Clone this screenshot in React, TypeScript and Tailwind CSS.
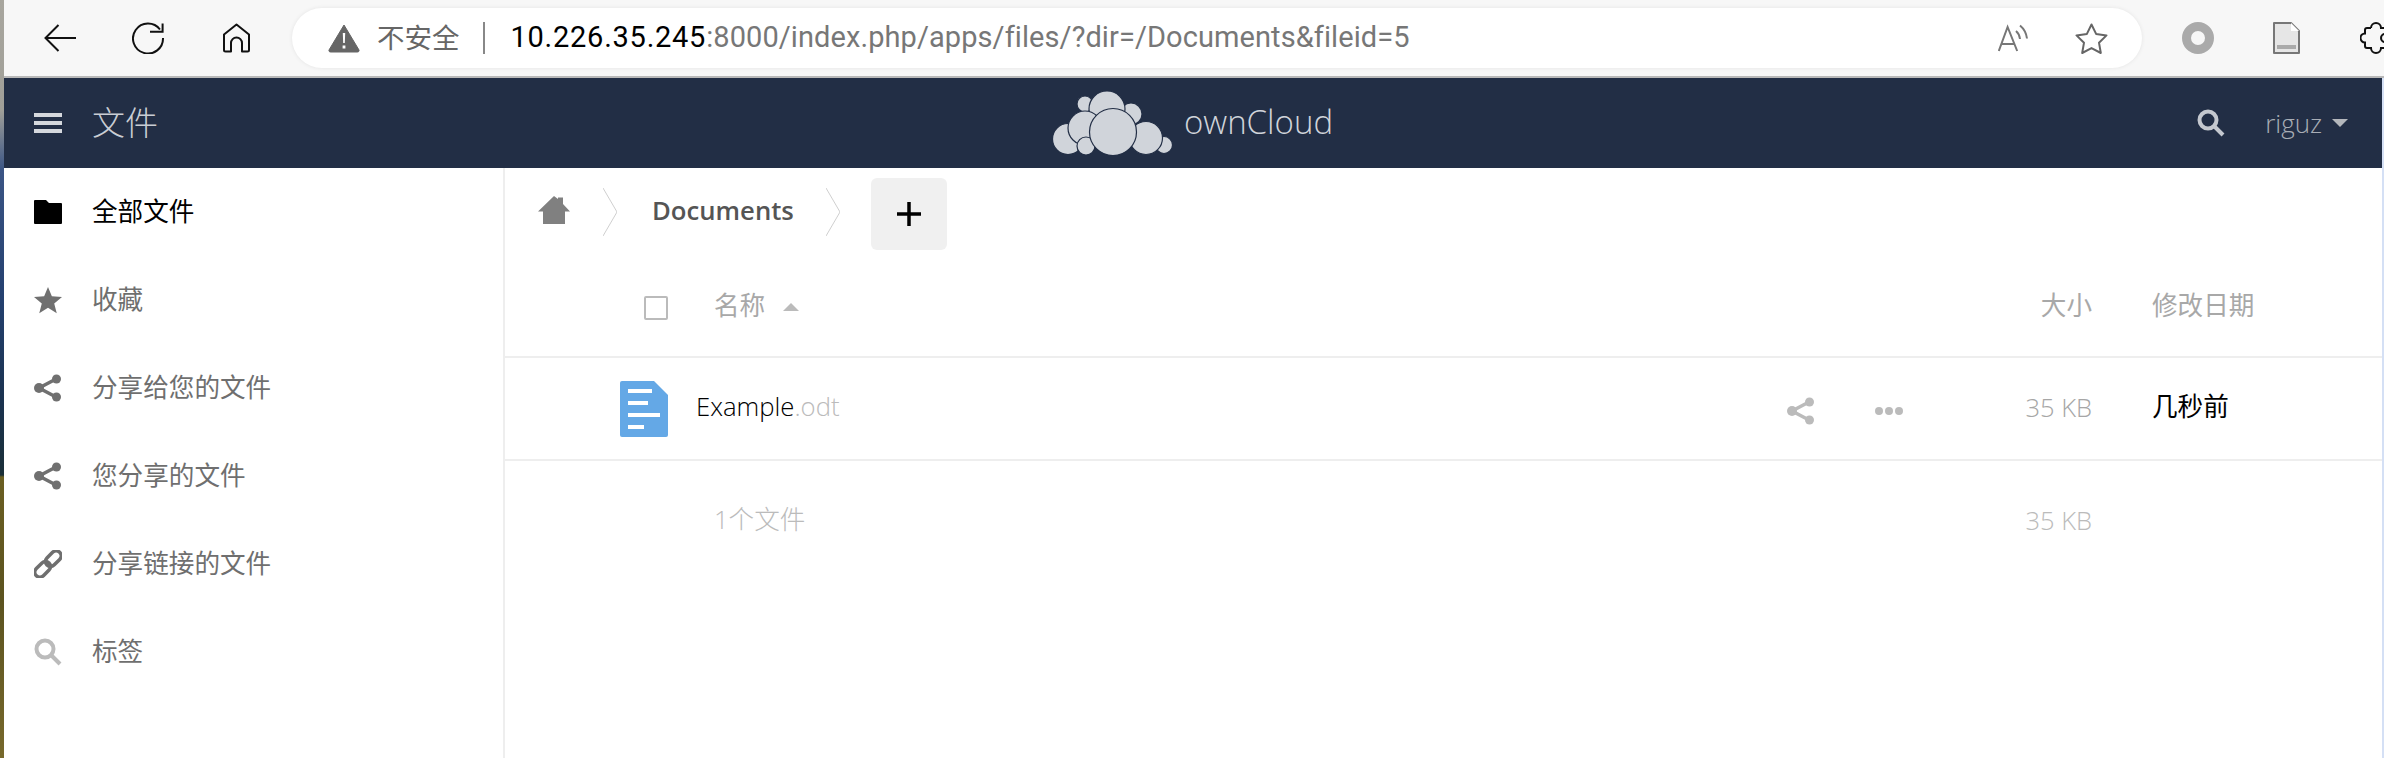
import type { ReactNode } from "react";

function ShareIcon({ className }: { className: string }) {
  return (
    <svg viewBox="0 0 28 28" className={className} fill="currentColor" stroke="currentColor">
      <circle cx="22.5" cy="5" r="4.5" stroke="none" />
      <circle cx="5" cy="14" r="5" stroke="none" />
      <circle cx="22.5" cy="23" r="4.5" stroke="none" />
      <path d="M22 5 5 14l17 9" fill="none" strokeWidth="3.5" />
    </svg>
  );
}

function LinkIcon() {
  return (
    <svg viewBox="0 0 28 28" className="h-7 w-7 text-[#6f6f6f]" fill="none" stroke="currentColor" strokeWidth="3.5">
      <rect x="-2.5" y="9" width="18" height="10" rx="5" transform="rotate(-45 14 14)" />
      <rect x="12.5" y="9" width="18" height="10" rx="5" transform="rotate(-45 14 14)" />
    </svg>
  );
}

function SearchIcon({ className }: { className: string }) {
  return (
    <svg viewBox="0 0 28 28" className={className} fill="none" stroke="currentColor">
      <circle cx="11" cy="11" r="8.5" strokeWidth="4" />
      <path d="M16.5 16.5 26 26" strokeWidth="4" />
    </svg>
  );
}

function NavItem({ icon, label, active }: { icon: ReactNode; label: string; active?: boolean }) {
  return (
    <div className={`flex h-[88px] items-center pl-[30px] text-[25.6px] ${active ? "text-black" : "text-[#6f6f6f]"}`}>
      <div className="flex w-7 justify-center">{icon}</div>
      <span className="ml-[30px]">{label}</span>
    </div>
  );
}

function Toolbar() {
  return (
    <div className="flex h-[76px] items-center overflow-hidden bg-[#f7f7f7] pl-10">
      <svg viewBox="0 0 32 28" className="h-7 w-8 shrink-0" fill="none" stroke="#111" strokeWidth="2">
        <path d="M32 14H1.5M14.5 1 1.5 14l13 13" />
      </svg>
      <svg viewBox="0 0 33 32" className="ml-14 h-8 w-[33px] shrink-0" fill="none" stroke="#111" strokeWidth="2">
        <path d="M28 7.5A15 15 0 1 0 31 16" />
        <path d="M30.6 1.5v8.2H18" />
      </svg>
      <svg viewBox="0 0 29 30" className="ml-[57px] h-[30px] w-[29px] shrink-0" fill="none" stroke="#111" strokeWidth="2">
        <path d="M2 11.5 14.5 1.5 27 11.5V27a1.5 1.5 0 0 1-1.5 1.5H20V20a5.5 5.5 0 0 0-11 0v8.5H3.5A1.5 1.5 0 0 1 2 27Z" strokeLinejoin="round" />
      </svg>

      <div className="ml-[41px] flex h-[60px] w-[1850px] shrink-0 items-center rounded-full bg-white pl-9 pr-[34px] shadow-[0_0_4px_rgba(0,0,0,0.08)]">
        <svg viewBox="0 0 32 30" className="h-[30px] w-8 shrink-0">
          <path d="M16 2 31 27a1.5 1.5 0 0 1-1.5 2h-27A1.5 1.5 0 0 1 1 27Z" fill="#666" stroke="#666" strokeWidth="1" strokeLinejoin="round" />
          <path d="M14.8 10h2.4l-.4 10h-1.6Z M14.6 22.5h2.8v3h-2.8Z" fill="#fff" />
        </svg>
        <span className="ml-[17px] text-[27.5px] text-[#666]">不安全</span>
        <div className="ml-[23px] h-8 w-[2px] bg-[#888]" />
        <div className="ml-[26px] font-['Roboto',sans-serif] text-[29px] tracking-[0.08px] text-[#777]">
          <span className="tracking-[0.75px] text-black">10.226.35.245</span>:8000/index.php/apps/files/?dir=/Documents&amp;fileid=5
        </div>
        <svg viewBox="0 0 30 28" className="ml-auto h-7 w-[30px] shrink-0" fill="none" stroke="#777" strokeWidth="2">
          <path d="M.8 27 9.6 3l9.6 24M3.8 20h12.6" />
          <path d="M18 7q3.5 3 4 8M22 1.5q6 5 7 13" />
        </svg>
        <svg viewBox="0 0 33 31" className="ml-[47px] h-[31px] w-[33px] shrink-0" fill="none" stroke="#666" strokeWidth="2" strokeLinejoin="round">
          <path d="m16.5 1.5 4.6 9.4 10.4 1.5-7.5 7.3 1.8 10.3-9.3-4.9-9.3 4.9 1.8-10.3-7.5-7.3 10.4-1.5Z" />
        </svg>
      </div>

      <svg viewBox="0 0 32 32" className="ml-10 h-8 w-8 shrink-0" fill="none" stroke="#aaa" strokeWidth="9">
        <circle cx="16" cy="16" r="11.5" />
      </svg>
      <svg viewBox="0 0 28 32" className="ml-[58px] h-8 w-7 shrink-0">
        <path d="M2 1h17l8 8v22H2Z" fill="#e6e6e6" stroke="#777" strokeWidth="2" strokeLinejoin="round" />
        <path d="M19 1v8h8" fill="#fff" />
        <rect x="5" y="23" width="19" height="4" fill="#aaa" />
      </svg>
      <svg viewBox="0 0 32 32" className="ml-[60px] h-8 w-8 shrink-0" fill="none" stroke="#111" strokeWidth="2">
        <path d="M11 6a5 5 0 0 1 10 0h4a2 2 0 0 1 2 2v3M11 6H7a2 2 0 0 0-2 2v3.5a4.5 4.5 0 0 0 0 9V24a2 2 0 0 0 2 2h4a5 5 0 0 0 10 0h4" />
        <path d="M25 12a4 4 0 0 0 0 8" />
      </svg>
    </div>
  );
}

function Header() {
  return (
    <div className="grid h-[90px] grid-cols-[1fr_auto_1fr] items-center bg-[#222e45]">
      <div className="flex items-center pl-[30px]">
        <svg viewBox="0 0 28 20" className="h-5 w-7 fill-[#d5d8dd]">
          <rect width="28" height="4" />
          <rect y="8" width="28" height="4" />
          <rect y="16" width="28" height="4" />
        </svg>
        <span className="ml-[30px] text-[33px] font-light text-[#c9cdd4]">文件</span>
      </div>

      <div className="flex items-center">
        <svg viewBox="0 0 120 66" className="h-[66px] w-[120px]" fill="#d0d4da" stroke="#222e45" strokeWidth="1.2">
          <circle cx="32" cy="14" r="8" />
          <circle cx="78" cy="24" r="11" />
          <circle cx="54" cy="19" r="18" />
          <circle cx="15" cy="49" r="15.5" />
          <circle cx="111" cy="55" r="8.5" />
          <circle cx="32" cy="38" r="17" />
          <circle cx="93" cy="48" r="16.5" />
          <circle cx="33" cy="56" r="9" />
          <circle cx="60" cy="42" r="23.5" />
        </svg>
        <span className="mb-[3px] ml-[11px] text-[33px] leading-none font-light text-[#d0d4da]">ownCloud</span>
      </div>

      <div className="flex items-center justify-end pr-[34px]">
        <SearchIcon className="h-7 w-7 text-[#c4c8cf]" />
        <span className="ml-10 text-[26px] font-light text-[#a8adb5]">riguz</span>
        <svg viewBox="0 0 16 8" className="ml-[10px] h-2 w-4 fill-[#b4b7bc]">
          <path d="M0 0h16L8 8Z" />
        </svg>
      </div>
    </div>
  );
}

function Sidebar() {
  return (
    <nav className="w-[501px] shrink-0 border-r-2 border-[#eeeeee]">
      <NavItem
        active
        label="全部文件"
        icon={
          <svg viewBox="0 0 28 24" className="h-6 w-7 fill-black">
            <path d="M1 0h11l3 3h12a1 1 0 0 1 1 1v19a1 1 0 0 1-1 1H1a1 1 0 0 1-1-1V1a1 1 0 0 1 1-1Z" />
          </svg>
        }
      />
      <NavItem
        label="收藏"
        icon={
          <svg viewBox="0 0 32 30" className="h-[30px] w-8 fill-[#707070]">
            <path d="m16 0 4.4 10.7 11.6.8-8.9 7.4 2.9 11.1-10-6.1-10 6.1 2.9-11.1L0 11.5l11.6-.8Z" />
          </svg>
        }
      />
      <NavItem label="分享给您的文件" icon={<ShareIcon className="h-7 w-7 text-[#707070]" />} />
      <NavItem label="您分享的文件" icon={<ShareIcon className="h-7 w-7 text-[#707070]" />} />
      <NavItem label="分享链接的文件" icon={<LinkIcon />} />
      <NavItem label="标签" icon={<SearchIcon className="h-7 w-7 text-[#bbbbbb]" />} />
    </nav>
  );
}

function Chevron() {
  return (
    <svg viewBox="0 0 14 48" className="h-12 w-[14px] shrink-0" fill="none" stroke="#cfcfcf" strokeWidth="1">
      <path d="m0 0 14 24L0 48" />
    </svg>
  );
}

function FileTable() {
  return (
    <main className="min-w-0 flex-1">
      <div className="flex h-[88px] items-center pl-[33px]">
        <svg viewBox="0 0 32 28" className="mb-1 h-7 w-8 fill-[#808080]">
          <path d="M16 0l4 3V1.5h5V8l7 7.5h-5V28H5V15.5H0Z" />
        </svg>
        <div className="ml-[33px]">
          <Chevron />
        </div>
        <span className="mb-[2px] ml-[35px] text-[25.7px] font-semibold text-[#555555]">Documents</span>
        <div className="ml-8">
          <Chevron />
        </div>
        <button className="mt-1 ml-[31px] flex h-[72px] w-[76px] items-center justify-center rounded-md bg-[#f0f0f0]">
          <svg viewBox="0 0 24 24" className="h-6 w-6" stroke="#000" strokeWidth="3.5">
            <path d="M0 12h24M12 0v24" />
          </svg>
        </button>
      </div>

      <div className="flex h-[102px] items-center border-b-2 border-[#eeeeee] pl-[139px] text-[25.6px] text-[#a8a8a8]">
        <div className="mt-1 h-6 w-6 rounded-[2px] border-2 border-[#bbbbbb]" />
        <span className="ml-[46px]">名称</span>
        <svg viewBox="0 0 16 8" className="mt-0.5 ml-[18px] h-2 w-4 fill-[#bbbbbb]">
          <path d="M8 0l8 8H0Z" />
        </svg>
        <span className="mr-[60px] ml-auto">大小</span>
        <span className="w-[230px]">修改日期</span>
      </div>

      <div className="flex h-[103px] items-center border-b-2 border-[#eeeeee] pl-[115px]">
        <svg viewBox="0 0 48 56" className="h-14 w-12 shrink-0">
          <path d="M2 0h32l14 14v40a2 2 0 0 1-2 2H2a2 2 0 0 1-2-2V2a2 2 0 0 1 2-2Z" fill="#64a8e6" />
          <path d="M8 8h24v4H8Zm0 12h20v4H8Zm0 12h32v4H8Zm0 12h16v4H8Z" fill="#fff" />
        </svg>
        <span className="mb-0.5 ml-7 text-[25.7px] font-light text-black">
          Example<span className="text-[#bbbbbb]">.odt</span>
        </span>
        <ShareIcon className="mt-1 ml-auto h-7 w-7 text-[#bbbbbb]" />
        <svg viewBox="0 0 28 10" className="mt-1 ml-[60px] h-[10px] w-7 fill-[#bbbbbb]">
          <circle cx="4" cy="5" r="4" />
          <circle cx="14" cy="5" r="4" />
          <circle cx="24" cy="5" r="4" />
        </svg>
        <span className="mb-0.5 w-[189px] text-right text-[25.5px] font-light text-[#a6a6a6]">35 KB</span>
        <span className="mb-0.5 ml-[60px] w-[230px] text-[25.6px] text-black">几秒前</span>
      </div>

      <div className="flex h-[118px] items-center pl-[209px] text-[25.6px] font-light text-[#bbbbbb]">
        <span>1个文件</span>
        <span className="mr-[290px] ml-auto text-[25.5px]">35 KB</span>
      </div>
    </main>
  );
}

export default function App() {
  return (
    <div className="flex h-[758px] w-[2384px] overflow-hidden bg-white font-['Open_Sans','Noto_Sans_CJK_SC',sans-serif]">
      <div className="w-1 shrink-0 bg-[linear-gradient(to_bottom,#a8a69e_0,#a09f98_110px,#3b5585_170px,#24406f_300px,#1b3350_400px,#1a2f38_475px,#6b5f22_477px,#5c5320_600px,#77692c_758px)]" />
      <div className="flex min-w-0 flex-1 flex-col">
        <Toolbar />
        <div className="h-[2px] shrink-0 bg-[#b9b9b9]" />
        <div className="flex min-h-0 flex-1">
          <div className="flex min-w-0 flex-1 flex-col">
            <Header />
            <div className="flex min-h-0 flex-1">
              <Sidebar />
              <FileTable />
            </div>
          </div>
          <div className="w-[2px] shrink-0 bg-[#d5e0f5]" />
        </div>
      </div>
    </div>
  );
}
